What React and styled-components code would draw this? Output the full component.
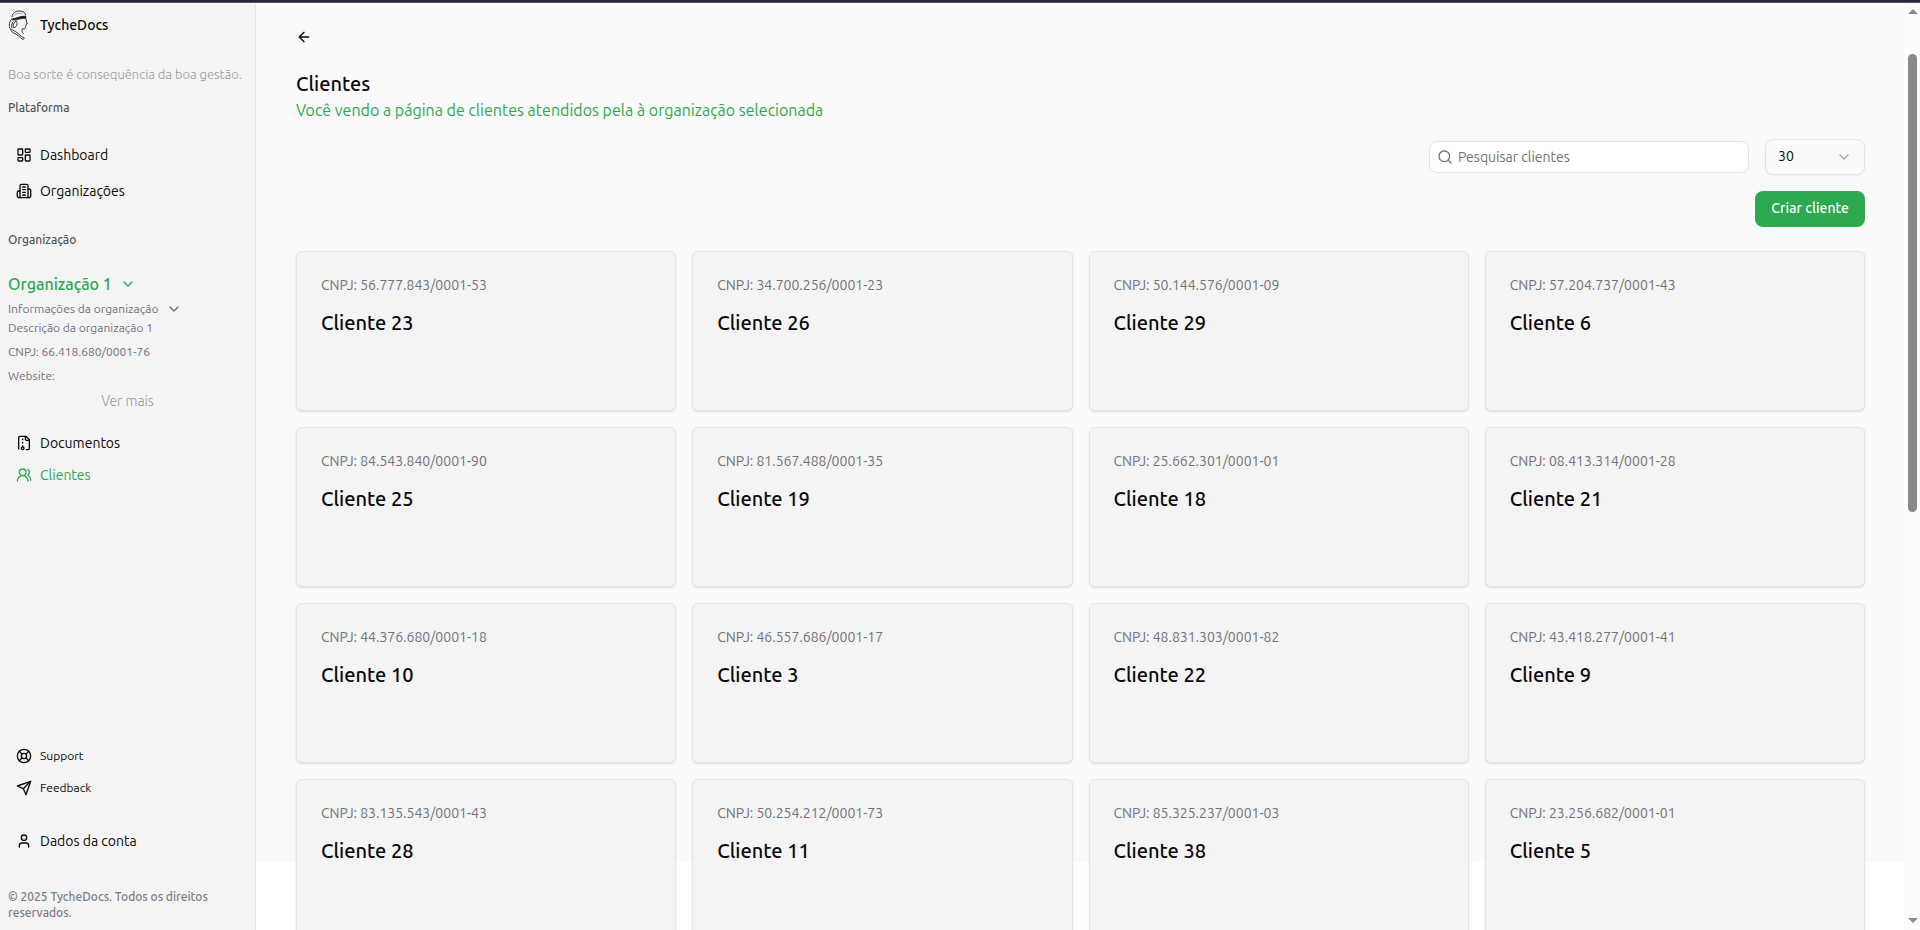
import React, { useState } from 'react';
import styled, { createGlobalStyle } from 'styled-components';
import {
  ArrowLeft,
  ChevronDown,
  LayoutDashboard,
  LifeBuoy,
  Search,
  User,
  UsersRound,
} from 'lucide-react';

const GlobalStyle = createGlobalStyle`
  * {
    box-sizing: border-box;
  }
  body {
    margin: 0;
    background: #ffffff;
    color: #09090b;
    font-family: Ubuntu, "Noto Sans", sans-serif;
    font-size: 14px;
    line-height: 20px;
  }
  h1, h2, p {
    margin: 0;
  }
  button, input, select {
    font: inherit;
    color: inherit;
  }
  a {
    color: inherit;
    text-decoration: none;
  }
`;

const Page = styled.div`
  height: 100vh;
  display: flex;
  flex-direction: column;
  overflow: hidden;
  border-top: 2px solid #2a2438;
`;

const Shell = styled.div`
  flex: 1;
  min-height: 0;
  display: flex;
  border-top: 1px solid #59536a;
`;

const Sidebar = styled.aside`
  width: 256px;
  flex-shrink: 0;
  display: flex;
  flex-direction: column;
  padding: 0 8px 9px;
  background: #f4f4f4;
  border-right: 1px solid #e4e4e7;
`;

const Brand = styled.a`
  height: 44px;
  display: flex;
  align-items: center;
  gap: 12px;
  font-weight: 500;
  line-height: 20px;
`;

const Tagline = styled.p`
  margin-top: 17px;
  font-size: 13px;
  font-weight: 300;
  color: #98989c;
  white-space: nowrap;
`;

const SectionLabel = styled.p`
  margin-top: ${({ $top }) => $top}px;
  font-size: 12px;
  font-weight: 500;
  color: #54545a;
`;

const Nav = styled.nav`
  display: flex;
  flex-direction: column;
  margin-top: ${({ $top }) => $top};
`;

const NavItem = styled.a`
  height: ${({ $tall }) => ($tall ? 36 : 32)}px;
  display: flex;
  align-items: center;
  gap: 8px;
  padding: 0 8px;
  font-size: ${({ $small }) => ($small ? 12 : 14)}px;
  color: ${({ $active }) => ($active ? '#2da84f' : 'inherit')};
`;

const Toggle = styled.button`
  display: flex;
  align-items: center;
  align-self: flex-start;
  gap: 8px;
  padding: 0;
  border: 0;
  background: none;
  cursor: pointer;
`;

const OrgToggle = styled(Toggle)`
  height: 29px;
  margin-top: 19px;
  font-size: 16px;
  font-weight: 500;
  color: #2da84f;
`;

const InfoToggle = styled(Toggle)`
  height: 22px;
  font-size: 12px;
  color: #71717a;
`;

const OrgDetails = styled.div`
  display: flex;
  flex-direction: column;
  gap: 8px;
  font-size: 12px;
  line-height: 16px;
  color: #71717a;
`;

const SeeMore = styled.button`
  align-self: center;
  margin-top: 7px;
  padding: 0;
  border: 0;
  background: none;
  font-weight: 300;
  color: #98989c;
  cursor: pointer;
`;

const Copyright = styled.p`
  margin-top: 32px;
  font-size: 12px;
  font-weight: 500;
  line-height: 16px;
  color: #7c7c84;
`;

const Main = styled.main`
  flex: 1;
  min-width: 0;
  height: calc(100vh - 71px);
  padding: 26px 39px 0 40px;
  background: #fafafa;
`;

const BackLink = styled.a`
  display: inline-flex;
`;

const Title = styled.h1`
  margin-top: 20px;
  font-size: 20px;
  line-height: 28px;
  font-weight: 500;
`;

const Subtitle = styled.p`
  font-size: 16px;
  line-height: 24px;
  color: #2da84f;
`;

const Toolbar = styled.div`
  display: flex;
  align-items: center;
  justify-content: flex-end;
  gap: 16px;
  margin-top: 17px;
`;

const SearchField = styled.label`
  width: 320px;
  height: 32px;
  display: flex;
  align-items: center;
  gap: 5px;
  padding: 0 7px;
  background: #ffffff;
  border: 1px solid #e4e4e7;
  border-radius: 8px;
  color: #71717a;
`;

const SearchInput = styled.input`
  flex: 1;
  min-width: 0;
  padding: 0;
  border: 0;
  outline: 0;
  background: none;

  &::placeholder {
    color: #71717a;
    opacity: 1;
  }
`;

const SelectField = styled.label`
  width: 100px;
  height: 36px;
  display: grid;
  align-items: center;
  border: 1px solid #e4e4e7;
  border-radius: 8px;
  box-shadow: 0 1px 2px rgba(0, 0, 0, 0.05);

  & > * {
    grid-area: 1 / 1;
  }
  svg {
    justify-self: end;
    margin-right: 12px;
    color: #52525b;
    opacity: 0.5;
    pointer-events: none;
  }
`;

const PageSize = styled.select`
  width: 100%;
  height: 100%;
  padding: 0 12px 2px;
  border: 0;
  outline: 0;
  background: none;
  appearance: none;
`;

const Actions = styled.div`
  display: flex;
  justify-content: flex-end;
  margin-top: 16px;
`;

const PrimaryButton = styled.button`
  height: 36px;
  padding: 0 16px 2px;
  border: 0;
  border-radius: 8px;
  background: #2da94f;
  color: #fafafa;
  font-weight: 500;
  cursor: pointer;
`;

const CardGrid = styled.div`
  display: grid;
  grid-template-columns: repeat(4, minmax(0, 1fr));
  gap: 16px;
  margin-top: 24px;
`;

const Card = styled.article`
  height: 160px;
  display: flex;
  flex-direction: column;
  gap: 14px;
  padding: 23px 24px;
  background: #f4f4f4;
  border: 1px solid #e4e4e7;
  border-radius: 6px;
  box-shadow: 0 1px 2px rgba(0, 0, 0, 0.12);
`;

const CardId = styled.p`
  color: #71717a;
`;

const CardName = styled.h2`
  font-size: 20px;
  line-height: 28px;
  font-weight: 500;
`;

const Scrollbar = styled.div`
  width: 16px;
  flex-shrink: 0;
  display: flex;
  flex-direction: column;
  align-items: center;
  padding: 6px 0 7px 1px;
  background: #fcfcfc;
`;

const ScrollArrow = styled.div`
  border: 5px solid transparent;
  border-top: ${({ $down }) => ($down ? '5px solid #8a8a8a' : '0')};
  border-bottom: ${({ $down }) => ($down ? '0' : '5px solid #8a8a8a')};
`;

const ScrollTrack = styled.div`
  flex: 1;
  padding-top: 40px;
`;

const ScrollThumb = styled.div`
  width: 9px;
  height: 53%;
  border-radius: 5px;
  background: #8a8a8a;
`;

const clients = [
  ['56.777.843/0001-53', 'Cliente 23'],
  ['34.700.256/0001-23', 'Cliente 26'],
  ['50.144.576/0001-09', 'Cliente 29'],
  ['57.204.737/0001-43', 'Cliente 6'],
  ['84.543.840/0001-90', 'Cliente 25'],
  ['81.567.488/0001-35', 'Cliente 19'],
  ['25.662.301/0001-01', 'Cliente 18'],
  ['08.413.314/0001-28', 'Cliente 21'],
  ['44.376.680/0001-18', 'Cliente 10'],
  ['46.557.686/0001-17', 'Cliente 3'],
  ['48.831.303/0001-82', 'Cliente 22'],
  ['43.418.277/0001-41', 'Cliente 9'],
  ['83.135.543/0001-43', 'Cliente 28'],
  ['50.254.212/0001-73', 'Cliente 11'],
  ['85.325.237/0001-03', 'Cliente 38'],
  ['23.256.682/0001-01', 'Cliente 5'],
];

// Tyche: blindfolded head in profile
const Logo = () => (
  <svg width="20" height="30" viewBox="0 0 60 90" fill="none" stroke="#18181b" strokeWidth="2.6" strokeLinecap="round" strokeLinejoin="round">
    <path d="M12 20C13 9 23 3 34 3c10 0 17 4 19 11" />
    <path d="M18 16C25 10 34 8 43 10" strokeWidth="1.2" />
    <path d="M12 27c10-1 22-8 41-9v7c-13-1-23 4-37 5z" fill="#18181b" />
    <path d="M54 26l1 7 3 8-4 2v4l-2 3 1 3c-1 4-6 4-10 3-2 6-1 11 3 15" />
    <path d="M10 28C6 32 4 39 4 46c0 6 2 10 5 13" />
    <path d="M15 35c-4 6-5 13-3 19M24 33c-6 4-10 12-8 19 6 3 11-5 11-12 0-4-1-6-3-7z" />
    <path d="M9 59c0 6 5 9 12 12 7 4 14 9 21 16 3 2 7 0 7-3-6-2-11-6-15-10-6-6-12-10-20-14" />
  </svg>
);

const Icon = ({ children }) => (
  <svg width="16" height="16" viewBox="0 0 24 24" fill="none" stroke="currentColor" strokeWidth="2" strokeLinecap="round" strokeLinejoin="round">
    {children}
  </svg>
);

const FileArchive = () => (
  <Icon>
    <path d="M10 12v-1M10 18v-2M10 7V6" />
    <path d="M14 2v4a2 2 0 0 0 2 2h4" />
    <path d="M15.5 22H18a2 2 0 0 0 2-2V7l-5-5H6a2 2 0 0 0-2 2v16a2 2 0 0 0 .274 1.01" />
    <circle cx="10" cy="20" r="2" />
  </Icon>
);

const Building = () => (
  <Icon>
    <path d="M6 22V4a2 2 0 0 1 2-2h8a2 2 0 0 1 2 2v18Z" />
    <path d="M6 12H4a2 2 0 0 0-2 2v6a2 2 0 0 0 2 2h2" />
    <path d="M18 9h2a2 2 0 0 1 2 2v9a2 2 0 0 1-2 2h-2" />
    <path d="M10 6h4M10 10h4M10 14h4M10 18h4" />
  </Icon>
);

const PaperPlane = () => (
  <Icon>
    <path d="m22 2-7 20-4-9-9-4Z" />
    <path d="M22 2 11 13" />
  </Icon>
);

const SidebarContent = () => (
  <Sidebar>
    <Brand href="#">
      <Logo />
      TycheDocs
    </Brand>
    <Tagline>Boa sorte é consequência da boa gestão.</Tagline>
    <SectionLabel $top={14}>Plataforma</SectionLabel>
    <Nav $top="19px">
      <NavItem href="#dashboard" $tall>
        <LayoutDashboard size={16} />
        Dashboard
      </NavItem>
      <NavItem href="#organizacoes" $tall>
        <Building />
        Organizações
      </NavItem>
    </Nav>
    <SectionLabel $top={21}>Organização</SectionLabel>
    <OrgToggle type="button">
      Organização 1
      <ChevronDown size={16} />
    </OrgToggle>
    <InfoToggle type="button">
      Informações da organização
      <ChevronDown size={16} />
    </InfoToggle>
    <OrgDetails>
      <p>Descrição da organização 1</p>
      <p>CNPJ: 66.418.680/0001-76</p>
      <p>Website:</p>
    </OrgDetails>
    <SeeMore type="button">Ver mais</SeeMore>
    <Nav $top="16px">
      <NavItem href="#documentos">
        <FileArchive />
        Documentos
      </NavItem>
      <NavItem href="#clientes" $active>
        <UsersRound size={16} />
        Clientes
      </NavItem>
    </Nav>
    <Nav $top="auto">
      <NavItem href="#support" $small>
        <LifeBuoy size={16} />
        Support
      </NavItem>
      <NavItem href="#feedback" $small>
        <PaperPlane />
        Feedback
      </NavItem>
    </Nav>
    <Nav $top="21px">
      <NavItem href="#conta">
        <User size={16} />
        Dados da conta
      </NavItem>
    </Nav>
    <Copyright>© 2025 TycheDocs. Todos os direitos reservados.</Copyright>
  </Sidebar>
);

const App = () => {
  const [search, setSearch] = useState('');
  const [pageSize, setPageSize] = useState('30');

  const visible = clients.filter(([, name]) => name.toLowerCase().includes(search.toLowerCase()));

  return (
    <Page>
      <GlobalStyle />
      <Shell>
        <SidebarContent />
        <Main>
          <BackLink href="#voltar" aria-label="Voltar">
            <ArrowLeft size={16} />
          </BackLink>
          <Title>Clientes</Title>
          <Subtitle>Você vendo a página de clientes atendidos pela à organização selecionada</Subtitle>
          <Toolbar>
            <SearchField>
              <Search size={16} />
              <SearchInput
                type="text"
                aria-label="Pesquisar clientes"
                placeholder="Pesquisar clientes"
                value={search}
                onChange={(e) => setSearch(e.target.value)}
              />
            </SearchField>
            <SelectField>
              <PageSize aria-label="Clientes por página" value={pageSize} onChange={(e) => setPageSize(e.target.value)}>
                <option>10</option>
                <option>20</option>
                <option>30</option>
              </PageSize>
              <ChevronDown size={16} />
            </SelectField>
          </Toolbar>
          <Actions>
            <PrimaryButton type="button">Criar cliente</PrimaryButton>
          </Actions>
          <CardGrid>
            {visible.map(([cnpj, name]) => (
              <Card key={cnpj}>
                <CardId>CNPJ: {cnpj}</CardId>
                <CardName>{name}</CardName>
              </Card>
            ))}
          </CardGrid>
        </Main>
        <Scrollbar aria-hidden="true">
          <ScrollArrow />
          <ScrollTrack>
            <ScrollThumb />
          </ScrollTrack>
          <ScrollArrow $down />
        </Scrollbar>
      </Shell>
    </Page>
  );
};

export default App;
